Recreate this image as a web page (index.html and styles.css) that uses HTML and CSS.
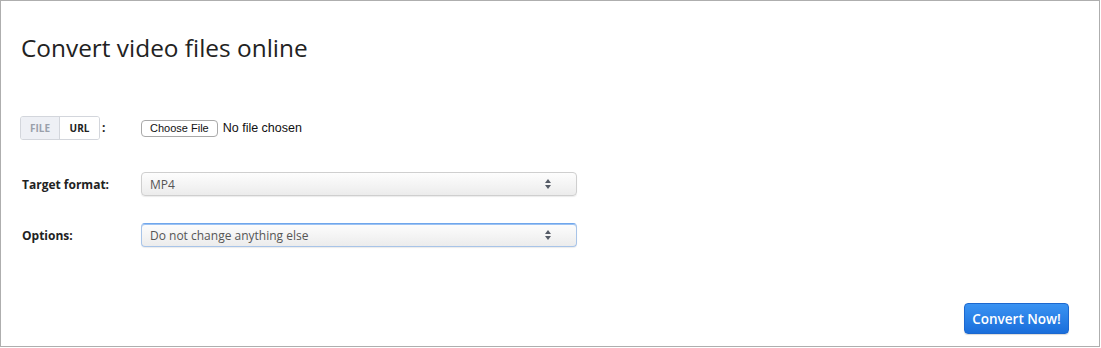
FILE: index.html
```html
<!DOCTYPE html>
<html>
<head>
<meta charset="utf-8">
<link rel="stylesheet" href="styles.css">
</head>
<body>
<div class="panel">
  <h1 class="title">Convert video files online</h1>
  <div class="form">
    <div class="row row-file">
      <div class="label-col">
        <div class="toggle">
          <span class="seg seg-off">FILE</span>
          <span class="seg seg-on">URL</span>
        </div>
        <span class="colon">:</span>
      </div>
      <div class="field">
        <button class="choose">Choose File</button>
        <span class="nofile">No file chosen</span>
      </div>
    </div>
    <div class="row row-target">
      <div class="label-col"><span class="label">Target format:</span></div>
      <div class="select">
        <span class="select-text">MP4</span>
        <span class="arrows"><span class="up"></span><span class="down"></span></span>
      </div>
    </div>
    <div class="row row-options">
      <div class="label-col"><span class="label">Options:</span></div>
      <div class="select focused">
        <span class="select-text">Do not change anything else</span>
        <span class="arrows"><span class="up"></span><span class="down"></span></span>
      </div>
    </div>
  </div>
  <div class="footer">
    <button class="convert">Convert Now!</button>
  </div>
</div>
</body>
</html>
```
FILE: styles.css
```css
html, body {
  margin: 0;
  padding: 0;
  background: #fff;
}
body {
  font-family: "Open Sans", "Liberation Sans", sans-serif;
  color: #222;
}
.panel {
  box-sizing: border-box;
  width: 1100px;
  height: 347px;
  border: 1px solid #aeaeae;
  padding: 30px 30px 12px 19px;
  display: flex;
  flex-direction: column;
}
.title {
  margin: 0 0 0 1px;
  font-size: 24.4px;
  line-height: 33px;
  font-weight: 400;
  color: #222;
}
.form {
  margin-top: 53px;
  display: flex;
  flex-direction: column;
}
.row {
  display: flex;
  align-items: center;
  height: 24px;
}
.row-file { margin-top: -1px; }
.row-target { margin-top: 32px; }
.row-options { margin-top: 27px; }
.label-col {
  width: 120px;
  display: flex;
  align-items: center;
}
.label {
  font-size: 12px;
  font-weight: 700;
  color: #222;
  padding-left: 2px;
}
.toggle {
  display: flex;
  height: 24px;
  box-sizing: border-box;
  border: 1px solid #d3d6dc;
  border-radius: 3px;
  overflow: hidden;
}
.seg {
  display: flex;
  align-items: center;
  justify-content: center;
  font-size: 10px;
  font-weight: 700;
}
.seg-off {
  width: 38px;
  background: #eef0f5;
  color: #9aa0ab;
  border-right: 1px solid #d3d6dc;
}
.seg-on {
  width: 39px;
  background: #fff;
  color: #222;
}
.colon {
  font-size: 12px;
  font-weight: 700;
  margin-left: 2px;
  margin-top: -2px;
}
.field {
  display: flex;
  align-items: center;
  margin-left: 1px;
}
.choose {
  height: 17px;
  box-sizing: border-box;
  padding: 0 8px;
  border: 1px solid #a9a9a9;
  border-radius: 4px;
  background: #fff;
  font-family: "Liberation Sans", Arial, sans-serif;
  font-size: 11px;
  color: #111;
  line-height: 15px;
}
.nofile {
  font-family: "Liberation Sans", Arial, sans-serif;
  font-size: 12.5px;
  color: #111;
  margin-left: 5px;
}
.select {
  margin-left: 1px;
  width: 436px;
  height: 24px;
  box-sizing: border-box;
  border: 1px solid #cfcfcf;
  border-radius: 4px;
  background: linear-gradient(#fdfdfd, #ececec);
  box-shadow: 0 1px 1px rgba(0,0,0,0.08);
  display: flex;
  align-items: center;
  justify-content: space-between;
  padding: 0 25px 0 8px;
}
.select.focused {
  border-color: #a8c4e8;
  border-top-color: #6fa6ec;
  box-shadow: inset 0 1px 0 #9cc2f2, 0 1px 1px rgba(0,0,0,0.08);
}
.select-text {
  font-size: 12px;
  color: #555;
}
.arrows {
  display: flex;
  flex-direction: column;
  align-items: center;
  gap: 2px;
}
.up {
  width: 0;
  height: 0;
  border-left: 3.5px solid transparent;
  border-right: 3.5px solid transparent;
  border-bottom: 4px solid #555b66;
}
.down {
  width: 0;
  height: 0;
  border-left: 3.5px solid transparent;
  border-right: 3.5px solid transparent;
  border-top: 4px solid #555b66;
}
.footer {
  margin-top: auto;
  display: flex;
  justify-content: flex-end;
}
.convert {
  width: 105px;
  height: 31px;
  box-sizing: border-box;
  border: 1px solid #1c68cf;
  border-radius: 4px;
  background: linear-gradient(#3a93f2, #1a6edb);
  color: #fff;
  font-family: "Open Sans", sans-serif;
  font-size: 13.5px;
  font-weight: 600;
  padding: 0;
  box-shadow: 0 1px 1px rgba(0,0,0,0.15);
}
```
